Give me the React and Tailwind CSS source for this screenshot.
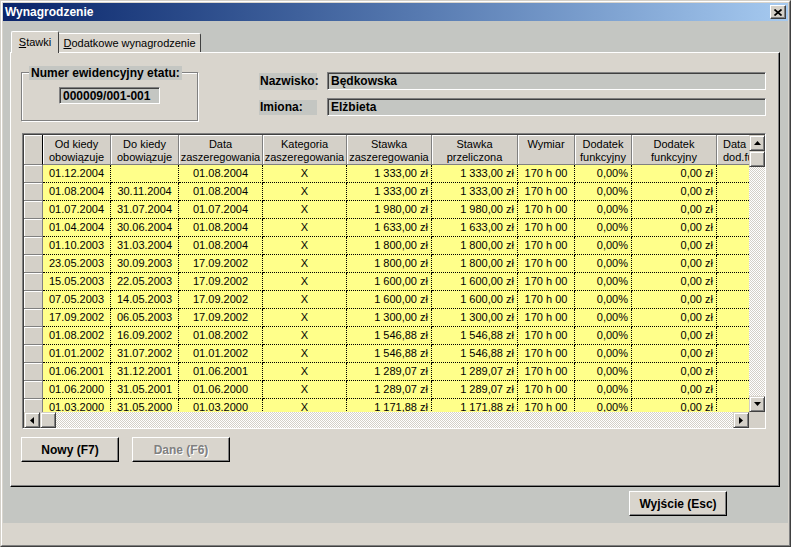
import React from "react";

const raisedBtn =
  "bg-[#d4d0c8] border border-t-[#d4d0c8] border-l-[#d4d0c8] border-r-[#404040] border-b-[#404040] shadow-[inset_1px_1px_0_#fff,inset_-1px_-1px_0_#808080]";
const pushBtn =
  "bg-[#d9d5cd] border border-t-white border-l-white border-r-black border-b-black shadow-[inset_-1px_-1px_0_#808080] flex items-center justify-center text-[12px] font-bold leading-none";
const sunken =
  "bg-[#c4c6c2] border border-t-[#808080] border-l-[#808080] border-r-white border-b-white shadow-[inset_1px_1px_0_#404040] flex items-center text-[12px] font-bold leading-none";
const checker =
  "bg-[image:repeating-conic-gradient(#ffffff_0_25%,#d4d0c8_0_50%)] bg-size-[2px_2px]";

const columns = [
  { w: "w-[68px]", head: ["Od kiedy", "obowiązuje"], align: "c" },
  { w: "w-[68px]", head: ["Do kiedy", "obowiązuje"], align: "c" },
  { w: "w-[84px]", head: ["Data", "zaszeregowania"], align: "c" },
  { w: "w-[84px]", head: ["Kategoria", "zaszeregowania"], align: "c" },
  { w: "w-[85px]", head: ["Stawka", "zaszeregowania"], align: "r" },
  { w: "w-[86px]", head: ["Stawka", "przeliczona"], align: "r" },
  { w: "w-[57px]", head: ["Wymiar"], align: "c" },
  { w: "w-[57px]", head: ["Dodatek", "funkcyjny"], align: "r" },
  { w: "w-[85px]", head: ["Dodatek", "funkcyjny"], align: "r" },
  { w: "w-[62px]", head: ["Data", "dod.funkc."], align: "l" },
];

const rows = [
  ["01.12.2004", "", "01.08.2004", "1 333,00"],
  ["01.08.2004", "30.11.2004", "01.08.2004", "1 333,00"],
  ["01.07.2004", "31.07.2004", "01.07.2004", "1 980,00"],
  ["01.04.2004", "30.06.2004", "01.08.2004", "1 633,00"],
  ["01.10.2003", "31.03.2004", "01.08.2004", "1 800,00"],
  ["23.05.2003", "30.09.2003", "17.09.2002", "1 800,00"],
  ["15.05.2003", "22.05.2003", "17.09.2002", "1 600,00"],
  ["07.05.2003", "14.05.2003", "17.09.2002", "1 600,00"],
  ["17.09.2002", "06.05.2003", "17.09.2002", "1 300,00"],
  ["01.08.2002", "16.09.2002", "01.08.2002", "1 546,88"],
  ["01.01.2002", "31.07.2002", "01.01.2002", "1 546,88"],
  ["01.06.2001", "31.12.2001", "01.06.2001", "1 289,07"],
  ["01.06.2000", "31.05.2001", "01.06.2000", "1 289,07"],
  ["01.03.2000", "31.05.2000", "01.03.2000", "1 171,88"],
];

const Arrow = ({ dir }) => {
  const pts = {
    up: "0,4 7,4 3.5,0",
    down: "0,0 7,0 3.5,4",
    left: "4,0 4,7 0,3.5",
    right: "0,0 0,7 4,3.5",
  }[dir];
  const vertical = dir === "up" || dir === "down";
  return (
    <svg width={vertical ? 7 : 4} height={vertical ? 4 : 7} viewBox={vertical ? "0 0 7 4" : "0 0 4 7"}>
      <polygon points={pts} fill="#000" />
    </svg>
  );
};

const Cell = ({ col, children }) => {
  const align =
    col.align === "r" ? "justify-end pr-[3px]" : col.align === "l" ? "justify-start pl-[6px]" : "justify-center";
  return (
    <div
      className={`${col.w} ${align} shrink-0 h-full bg-[#ffff8a] border-r border-b border-dotted border-black flex items-center text-[11px] leading-none whitespace-nowrap overflow-hidden`}
    >
      {children}
    </div>
  );
};

const Grid = () => (
  <div className="mt-[12px] ml-[1px] w-[744px] h-[296px] border border-t-[#808080] border-l-[#808080] border-r-white border-b-white">
    <div className="w-full h-full border-t border-l border-[#404040] flex">
      <div className="w-[725px] flex flex-col">
        <div className="h-[277px] overflow-hidden bg-[#d9d5cd]">
          <div className="flex h-[30px]">
            <div className="w-[19px] shrink-0 bg-[#d4d0c8] border-r border-r-black border-b border-b-[#808080] shadow-[inset_1px_1px_0_#fff]" />
            {columns.map((c, i) => (
              <div
                key={i}
                className={`${c.w} shrink-0 bg-[#d4d0c8] border-r border-b border-[#808080] shadow-[inset_1px_1px_0_#fff] flex flex-col ${c.align === "l" ? "items-start pl-[6px]" : "items-center"} pt-[3px] text-[11px] leading-[13px] whitespace-nowrap overflow-hidden`}
              >
                {c.head.map((h) => (
                  <span key={h}>{h}</span>
                ))}
              </div>
            ))}
          </div>
          {rows.map((r, i) => (
            <div key={i} className="flex h-[18px]">
              <div className="w-[19px] shrink-0 h-full bg-[#d4d0c8] border-r border-b border-[#808080] shadow-[inset_1px_1px_0_#fff]" />
              <Cell col={columns[0]}>{r[0]}</Cell>
              <Cell col={columns[1]}>{r[1]}</Cell>
              <Cell col={columns[2]}>{r[2]}</Cell>
              <Cell col={columns[3]}>X</Cell>
              <Cell col={columns[4]}>{r[3]} zł</Cell>
              <Cell col={columns[5]}>{r[3]} zł</Cell>
              <Cell col={columns[6]}>170 h 00</Cell>
              <Cell col={columns[7]}>0,00%</Cell>
              <Cell col={columns[8]}>0,00 zł</Cell>
              <Cell col={columns[9]}></Cell>
            </div>
          ))}
        </div>
        {/* horizontal scrollbar */}
        <div className="h-[16px] flex">
          <div className={`w-[16px] h-full flex items-center justify-center ${raisedBtn}`}>
            <Arrow dir="left" />
          </div>
          <div className={`w-[16px] h-full ${raisedBtn}`} />
          <div className={`flex-1 h-full ${checker}`} />
          <div className={`w-[16px] h-full flex items-center justify-center ${raisedBtn}`}>
            <Arrow dir="right" />
          </div>
        </div>
      </div>
      {/* vertical scrollbar */}
      <div className="w-[16px] flex flex-col">
        <div className="h-[277px] flex flex-col">
          <div className={`h-[16px] flex items-center justify-center ${raisedBtn}`}>
            <Arrow dir="up" />
          </div>
          <div className={`h-[16px] ${raisedBtn}`} />
          <div className={`flex-1 ${checker}`} />
          <div className={`h-[16px] flex items-center justify-center ${raisedBtn}`}>
            <Arrow dir="down" />
          </div>
        </div>
        <div className="h-[16px] bg-[#d4d0c8]" />
      </div>
    </div>
  </div>
);

export default function App() {
  return (
    <div className="w-[791px] h-[547px] overflow-hidden bg-[#d9d5cd] border border-t-[#d4d0c8] border-l-[#d4d0c8] border-r-[#404040] border-b-[#404040] font-['Liberation_Sans',Arial,sans-serif] text-black">
      <div className="h-full border border-t-white border-l-white border-r-[#808080] border-b-[#808080] p-px flex flex-col">
        {/* title bar */}
        <div className="h-[18px] shrink-0 bg-linear-to-r from-[#0a246a] to-[#a6caf0] flex items-center justify-between pl-[2px] pr-[2px]">
          <span className="text-white text-[12px] font-bold leading-none">Wynagrodzenie</span>
          <button className="w-[16px] h-[14px] bg-[#d4d0c8] border border-t-white border-l-white border-r-[#404040] border-b-[#404040] shadow-[inset_-1px_-1px_0_#808080] flex items-center justify-center">
            <svg width="8" height="7" viewBox="0 0 8 7">
              <path d="M0.5 0.5 L7.5 6.5 M7.5 0.5 L0.5 6.5" stroke="#000" strokeWidth="1.7" />
            </svg>
          </button>
        </div>

        {/* client area */}
        <div className="h-[502px] shrink-0 bg-[#c4c6c2] pl-[7px] pt-[10px] flex flex-col">
          {/* tabs */}
          <div className="h-[21px] flex items-end pl-[1px] relative z-10">
            <div className="w-[48px] h-[22px] -mb-[1px] bg-[#d9d5cd] border-t border-l border-r border-t-white border-l-white border-r-[#404040] rounded-t-[2px] flex items-center justify-center text-[11px] leading-none">
              <span>
                <span className="underline">S</span>tawki
              </span>
            </div>
            <div className="w-[142px] h-[19px] bg-[#d9d5cd] border-t border-r border-t-white border-r-[#404040] rounded-tr-[2px] flex items-center justify-center text-[11px] leading-none">
              <span>
                <span className="underline">D</span>odatkowe wynagrodzenie
              </span>
            </div>
          </div>

          {/* tab panel */}
          <div className="w-[770px] h-[435px] bg-[#d9d5cd] border border-t-white border-l-white border-r-black border-b-black shadow-[inset_-1px_-1px_0_#808080] pl-[10px] pt-[19px] flex flex-col">
            <div className="flex h-[49px]">
              <div className="relative w-[177px] h-[49px] border border-[#808080] shadow-[inset_1px_1px_0_#fff,1px_1px_0_#fff]">
                <div className="absolute left-[7px] -top-[7px] h-[14px] px-[2px] bg-[#c4c6c2] text-[12px] font-bold leading-[14px] whitespace-nowrap">
                  Numer ewidencyjny etatu:
                </div>
                <div className={`mt-[14px] ml-[37px] w-[101px] h-[17px] pl-[3px] ${sunken}`}>000009/001-001</div>
              </div>
              <div className="ml-[61px] flex flex-col">
                <div className="flex items-center gap-[10px]">
                  <div className="w-[58px] h-[17px] bg-[#c4c6c2] pl-px flex items-center text-[12px] font-bold leading-none">
                    Nazwisko:
                  </div>
                  <div className={`w-[439px] h-[18px] pl-[3px] ${sunken}`}>Będkowska</div>
                </div>
                <div className="flex items-center gap-[10px] mt-[8px]">
                  <div className="w-[58px] h-[15px] bg-[#c4c6c2] pl-px flex items-center text-[12px] font-bold leading-none">
                    Imiona:
                  </div>
                  <div className={`w-[439px] h-[18px] pl-[3px] ${sunken}`}>Elżbieta</div>
                </div>
              </div>
            </div>

            <Grid />

            <div className="mt-[8px] flex gap-[13px]">
              <button className={`w-[98px] h-[25px] ${pushBtn}`}>Nowy (F7)</button>
              <button className={`w-[98px] h-[25px] text-[#808080] [text-shadow:1px_1px_0_#fff] ${pushBtn}`}>
                Dane (F6)
              </button>
            </div>
          </div>

          <div className="mt-[4px] ml-[619px]">
            <button className={`w-[98px] h-[25px] ${pushBtn}`}>Wyjście (Esc)</button>
          </div>
        </div>
      </div>
    </div>
  );
}
